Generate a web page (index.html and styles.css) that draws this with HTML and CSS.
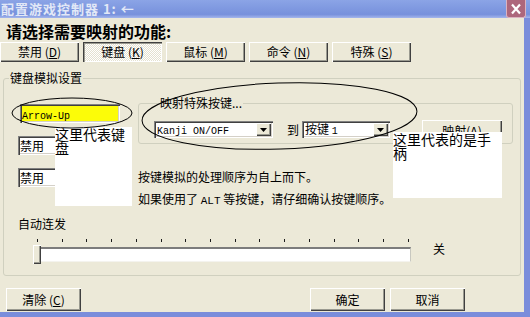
FILE: index.html
```html
<!DOCTYPE html>
<html lang="zh-CN">
<head>
<meta charset="utf-8">
<title>配置游戏控制器</title>
<link rel="stylesheet" href="styles.css">
</head>
<body>
<div class="window">
  <div class="titlebar">
    <span class="title">配置游戏控制器 1: ←</span>
    <span class="close"><svg width="10" height="12" viewBox="0 0 10 12"><path d="M1 1.5 L9 10.5 M9 1.5 L1 10.5" stroke="#fff" stroke-width="2.2" fill="none"/></svg></span>
  </div>
  <div class="client">
    <h1 class="heading">请选择需要映射的功能:</h1>
    <div class="tabs">
      <button class="btn tab">禁用 (<u>D</u>)</button>
      <button class="btn tab pressed">键盘 (<u>K</u>)</button>
      <button class="btn tab">鼠标 (<u>M</u>)</button>
      <button class="btn tab">命令 (<u>N</u>)</button>
      <button class="btn tab">特殊 (<u>S</u>)</button>
    </div>
    <fieldset class="group">
      <legend class="legend">键盘模拟设置</legend>
      <div class="group-main">
        <div class="key-col">
          <div class="field field-yellow"><span class="mono">Arrow-Up</span></div>
          <div class="field">禁用</div>
          <div class="field">禁用</div>
        </div>
        <div class="right-col">
          <fieldset class="special">
            <legend class="legend legend-special">映射特殊按键...</legend>
            <div class="special-row">
              <div class="combo combo-key">
                <span class="combo-text"><span class="mono">Kanji ON/OFF</span></span>
                <span class="combo-btn"><svg width="7" height="4" viewBox="0 0 7 4"><path d="M0 0H7L3.5 4Z" fill="#000"/></svg></span>
              </div>
              <span class="to">到</span>
              <div class="combo combo-target">
                <span class="combo-text">按键 <span class="mono">1</span></span>
                <span class="combo-btn"><svg width="7" height="4" viewBox="0 0 7 4"><path d="M0 0H7L3.5 4Z" fill="#000"/></svg></span>
              </div>
              <button class="btn map-btn">映射(<u>A</u>)</button>
            </div>
          </fieldset>
          <p class="note-line note-first">按键模拟的处理顺序为自上而下。</p>
          <p class="note-line">如果使用了 <span class="mono mono-inline">ALT</span> 等按键，请仔细确认按键顺序。</p>
        </div>
      </div>
      <div class="autofire-label">自动连发</div>
      <div class="slider-row">
        <div class="slider">
          <div class="ticks"><i></i><i></i><i></i><i></i><i></i><i></i><i></i><i></i><i></i><i></i><i></i><i></i><i></i><i></i><i></i><i></i></div>
          <div class="bar"><span class="thumb"></span><span class="track"></span></div>
        </div>
        <span class="slider-value">关</span>
      </div>
    </fieldset>
    <div class="footer">
      <button class="btn action">清除 (<u>C</u>)</button>
      <span class="spacer"></span>
      <button class="btn action">确定</button>
      <button class="btn action">取消</button>
    </div>
  </div>
</div>
<div class="annot annot-kbd">这里代表键盘</div>
<div class="annot annot-pad">这里代表的是手柄</div>
<svg class="annot-marks" width="530" height="317" viewBox="0 0 530 317">
  <ellipse cx="72" cy="113" rx="60" ry="15" fill="none" stroke="#000" stroke-width="1"/>
  <ellipse cx="279.5" cy="116" rx="137.5" ry="33" transform="rotate(-2 279.5 116)" fill="none" stroke="#000" stroke-width="1"/>
</svg>
</body>
</html>
```
FILE: styles.css
```css
* { box-sizing: border-box; }
html, body { margin: 0; padding: 0; }
body {
  width: 530px;
  height: 317px;
  overflow: hidden;
  position: relative;
  background: #ece9d8;
  font-family: "Noto Sans CJK SC", "Noto Sans", sans-serif;
  font-size: 12px;
  color: #000;
}
.window {
  width: 530px;
  height: 317px;
  display: flex;
  flex-direction: column;
}
.titlebar {
  height: 18px;
  flex: none;
  display: flex;
  align-items: center;
  justify-content: space-between;
  padding-left: 1px;
  background: linear-gradient(#8ba4e6, #7791dc 80%, #a4b6ec);
}
.title {
  font-weight: bold;
  font-size: 13px;
  line-height: 14px;
  letter-spacing: 1px;
  color: #e2e8f7;
}
.close {
  width: 20px;
  height: 18px;
  margin-right: 4px;
  background: #ad677c;
  border: 1px solid #dbb3c0;
  border-top: none;
  border-radius: 0 0 3px 3px;
  display: flex;
  align-items: center;
  justify-content: center;
}
.client {
  flex: 1;
  display: flex;
  flex-direction: column;
  border-right: 6px solid #7a8ddb;
  border-bottom: 5px solid #7a8ddb;
}
.heading {
  margin: 5px 0 0 6px;
  font-size: 16px;
  line-height: 16px;
  font-weight: bold;
}
.tabs {
  margin-top: 3px;
  display: flex;
  gap: 4px;
}
.btn {
  font: inherit;
  font-size: 12px;
  line-height: 12px;
  color: #000;
  background: #ece9d8;
  border: none;
  padding: 0;
  box-shadow: inset 1px 1px #fff, inset -1px -1px #404040, inset -2px -2px #9a9a90;
  display: flex;
  align-items: center;
  justify-content: center;
  flex: none;
}
.tab { width: 79px; height: 20px; }
.pressed {
  background: repeating-conic-gradient(#ffffff 0 25%, #e4e1d0 0 50%) 0 0 / 2px 2px;
  box-shadow: inset 1px 1px #404040, inset 2px 2px #9a9a90, inset -1px -1px #fff;
}
.group {
  margin: 10px 3px 0;
  padding: 0 7px 11px 0;
  border: 1px solid #d0d0bf;
  border-radius: 3px;
  min-width: 0;
}
.legend {
  padding: 0 1px;
  margin-left: 5px;
  font-size: 12px;
  line-height: 12px;
}
.group-main {
  display: grid;
  grid-template-columns: 134px 1fr;
}
.key-col {
  padding: 20px 0 0 14px;
  display: flex;
  flex-direction: column;
  align-items: flex-start;
  gap: 13px;
}
.field {
  width: 100px;
  height: 19px;
  padding-left: 2px;
  line-height: 19px;
  background: #fff;
  box-shadow: inset 1px 1px #808080, inset 2px 2px #404040, inset -1px -1px #fff, inset -2px -2px #d4d0c8;
}
.field-yellow {
  margin-left: 2px;
  background: #fcfc08;
}
.mono {
  font-family: "Liberation Mono", "DejaVu Sans Mono", monospace;
  font-size: 10px;
}
.right-col { padding-top: 13px; }
.special {
  margin: 0;
  width: 375px;
  padding: 11px 0 1px 15px;
  border: 1px solid #d0d0bf;
  border-radius: 3px;
  min-width: 0;
}
.special-row {
  display: flex;
  align-items: flex-start;
}
.combo {
  height: 17px;
  margin-top: 1px;
  padding: 2px;
  display: flex;
  align-items: center;
  background: #fff;
  box-shadow: inset 1px 1px #808080, inset 2px 2px #404040, inset -1px -1px #fff, inset -2px -2px #d4d0c8;
}
.combo-key { width: 119px; }
.combo-target { width: 88px; }
.combo-text {
  flex: 1;
  padding-left: 1px;
  line-height: 13px;
  white-space: nowrap;
}
.combo-btn {
  width: 15px;
  height: 13px;
  flex: none;
  display: flex;
  align-items: center;
  justify-content: center;
  background: #ece9d8;
  box-shadow: inset 1px 1px #fff, inset -1px -1px #404040, inset -2px -2px #9a9a90;
}
.to {
  margin: 1px 3px 0 14px;
  line-height: 17px;
}
.map-btn {
  width: 80px;
  height: 22px;
  margin-left: 32px;
}
.note-line {
  margin: 10px 0 0;
  line-height: 12px;
  white-space: nowrap;
}
.note-first { margin-top: 27px; }
.mono-inline { font-size: 11px; }
.autofire-label {
  margin: 11px 0 0 14px;
  line-height: 12px;
}
.slider-row {
  display: flex;
  align-items: flex-start;
  margin: 9px 0 0 29px;
}
.slider { width: 380px; }
.ticks {
  height: 4px;
  padding: 0 4px;
  display: flex;
  justify-content: space-between;
}
.ticks i {
  width: 1px;
  height: 3px;
  background: #1a1a1a;
}
.bar {
  margin-top: 2px;
  height: 19px;
  display: flex;
  align-items: center;
}
.thumb {
  width: 8px;
  height: 19px;
  background: #ece9d8;
  box-shadow: inset 1px 1px #fff, inset -1px -1px #404040, inset -2px -2px #9a9a90;
}
.track {
  width: 370px;
  height: 15px;
  background: #fff;
  border-top: 2px solid #7c7c7c;
  border-right: 1px solid #c8c8c0;
  border-bottom: 1px solid #f4f3ee;
}
.slider-value {
  margin: 4px 0 0 20px;
  line-height: 12px;
}
.footer {
  margin-top: 12px;
  display: flex;
  gap: 5px;
  padding: 0 59px 0 6px;
}
.spacer { flex: 1; }
.action { width: 75px; height: 23px; }
.annot {
  position: absolute;
  background: #fff;
  font-size: 14px;
  line-height: 14px;
  color: #000;
}
.annot-kbd {
  left: 55px;
  top: 127px;
  width: 77px;
  height: 79px;
}
.annot-pad {
  left: 393px;
  top: 132px;
  width: 109px;
  height: 66px;
}
.annot-marks {
  position: absolute;
  left: 0;
  top: 0;
  pointer-events: none;
}
```
